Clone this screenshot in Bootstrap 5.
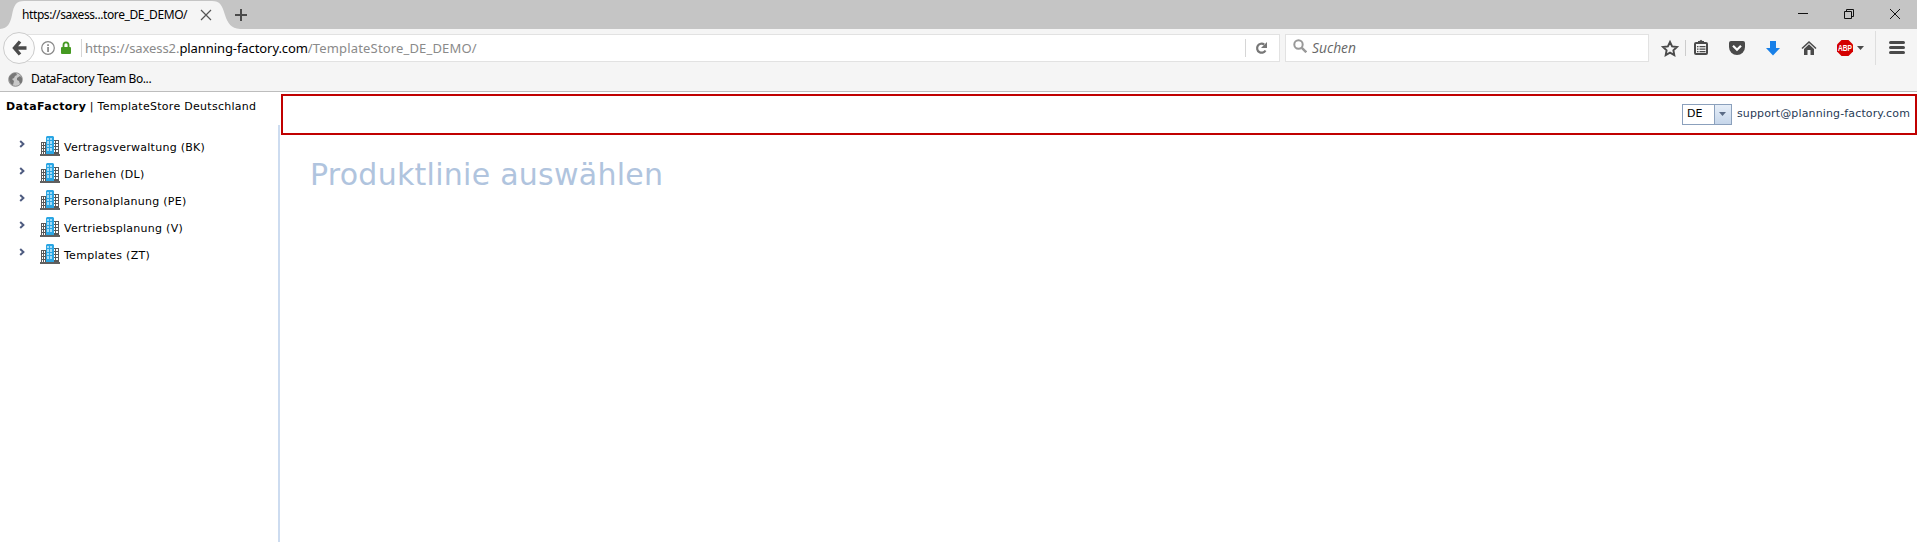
<!DOCTYPE html>
<html lang="de">
<head>
<meta charset="utf-8">
<title>DataFactory</title>
<link href="https://cdn.jsdelivr.net/npm/bootstrap@5.3.0/dist/css/bootstrap.min.css" rel="stylesheet">
<style>
body{height:542px;overflow:hidden;background:#fff;color:#000;font-family:"DejaVu Sans",sans-serif;font-size:11px;line-height:16px}
svg{display:block;flex:none}
.chrome{font-family:"Noto Sans",sans-serif;font-size:12px;background:#f5f5f5;height:92px;border-bottom:1px solid #bdbdbd}
.tabstrip{height:29px;background:#c5c5c5}
.tab-shape{left:0;top:0}
.tab-label{width:200px;padding-left:22px;letter-spacing:-.4px}
.new-tab{margin-left:22px}
.win-buttons{padding-right:16px;padding-bottom:3px}
.toolbar{height:38px}
.back{width:32px;height:32px;border:1px solid #ccc;border-radius:50%;background:#fafafa;margin-left:3px;z-index:1;flex:none}
.url{width:1261px;height:28px;margin-left:-16px;border:1px solid #e2e2e2;background:#fff;padding-left:21px;font-size:13px;color:#8a8a8a}
.url-scheme{letter-spacing:-.08px;margin-left:3px}
.url-host{color:#000}
.url-path{letter-spacing:.16px}
.finder{width:364px;height:28px;margin-left:5px;border:1px solid #e2e2e2;background:#fff;padding-left:7px;color:#666;font-size:13.8px}
.finder-text{font-family:"Open Sans",sans-serif;font-style:italic;padding-left:5px}
.rule{width:1px;height:18px;background:#d6d6d6;flex:none}
.bookmarks{height:24px;padding-left:8px;letter-spacing:-.42px;gap:8px}
.side{width:278px}
.side-title{height:33px;padding:7px 0 0 6px;white-space:nowrap}
.side-title b{letter-spacing:.44px}
.side-title span{letter-spacing:.28px}
.tree{padding-top:8px}
.node{height:27px;padding-left:19px;letter-spacing:.27px}
.node-text{padding:7px 0 0 4px}
.node-arrow{margin:7px 15px 0 0}
.node-icon{margin-top:3px}
.main-col{padding:2px 0 0 1px}
.divider{width:2px;background:#cddcf0;margin-top:33px}
.header-box{height:41px;border:2px solid #c00000;padding:0 5px 1px 0}
.lang{width:50px;height:21px;border:1px solid #8ba0bc;background:#fff}
.lang-arrow{width:17px;border-left:1px solid #8ba0bc;background:linear-gradient(#e6eef8,#c6d6ea)}
.mail{color:#283b56;text-decoration:none;letter-spacing:.14px;margin-left:5px}
.page-heading{font-size:30px;line-height:36px;color:#b0c4de;letter-spacing:.26px;font-weight:400;margin:22px 0 0 29px}
</style>
<script src="https://cdn.jsdelivr.net/npm/bootstrap@5.3.0/dist/js/bootstrap.bundle.min.js"></script>
</head>
<body class="d-flex flex-column">
<svg width="0" height="0" class="position-absolute">
  <symbol id="building" viewBox="0 0 20 20">
    <path fill="#585858" d="M1 6h6v12H1zM13 4h6v14h-6z"/>
    <path fill="#fff" d="M2 7h1v2H2zM4 7h1v2H4zM2 10h1v2H2zM4 10h1v2H4zM2 13h1v2H2zM4 13h1v2H4zM2 16h1v2H2zM4 16h1v2H4zM14 5h1v2h-1zM16 5h2v2h-2zM14 8h1v2h-1zM16 8h2v2h-2zM14 11h1v2h-1zM16 11h2v2h-2zM14 14h1v2h-1zM16 14h2v2h-2z"/>
    <path fill="#2ba6e4" d="M7 0h6l1 1v17H6V1z"/>
    <path fill="#a4dcf8" d="M7 2h2v2H7zM10 2h2v2h-2zM7 5h2v3H7zM10 5h2v3h-2zM7 9h2v2H7zM10 9h2v2h-2zM7 12h2v3H7zM10 12h2v3h-2z"/>
    <path fill="#606060" d="M0 18h20v2H0z"/>
  </symbol>
  <symbol id="arrow" viewBox="0 0 6 8"><path d="M1.200 1 4.400 4 1.200 7" fill="none" stroke="#4f5c80" stroke-width="2"/></symbol>
</svg>

<header class="chrome flex-shrink-0">
  <div class="tabstrip d-flex align-items-center position-relative">
    <svg class="tab-shape position-absolute" width="242" height="29"><path fill="#f5f5f5" d="M0 29C8 28 10 24 12 15C14 5 16 1 24 1H212C220 1 222 5 225 15C228 24 231 28 240 29Z"/></svg>
    <div class="tab-label position-relative">https://saxess...tore_DE_DEMO/</div>
    <svg class="position-relative" width="12" height="12"><path d="m1 1 10 10M11 1 1 11" stroke="#555" stroke-width="1.200"/></svg>
    <svg class="new-tab" width="14" height="14"><path d="M7 1v12M1 7h12" stroke="#4a4a4a" stroke-width="2"/></svg>
    <div class="win-buttons d-flex align-items-center ms-auto">
      <svg width="104" height="14" viewBox="0 0 104 14" fill="none" stroke="#111"><path d="M1 7.500h10M47.500 5.500h7v7h-7zM49.500 5V3.500h7v7H55M93 3l10 10M103 3 93 13"/></svg>
    </div>
  </div>

  <div class="toolbar d-flex align-items-center">
    <div class="back d-flex align-items-center justify-content-center"><svg width="15" height="16" fill="none" stroke="#4a4a4a" stroke-width="3.400"><path d="M8 1.500 2.500 8 8 14.500M3 8h11.500"/></svg></div>
    <div class="url d-flex align-items-center flex-shrink-0">
      <svg width="14" height="14"><circle cx="7" cy="7" r="6.300" fill="none" stroke="#888" stroke-width="1.200"/><path fill="#888" d="M6.200 6h1.700v5H6.200zM6.200 3.200h1.700v1.700H6.200z"/></svg>
      <svg class="ms-1" width="14" height="14"><path d="M4.500 7V4a2.500 2.700 0 0 1 5 0v3" fill="none" stroke="#459a22" stroke-width="1.800"/><rect x="2" y="6" width="10" height="7" rx="1" fill="#459a22"/></svg>
      <div class="rule ms-2"></div>
      <div class="url-scheme">https://saxess2.<span class="url-host">planning-factory.com</span><span class="url-path">/TemplateStore_DE_DEMO/</span></div>
      <div class="rule ms-auto"></div>
      <svg width="33" height="14" viewBox="0 0 33 14"><path d="M19.500 9.500A4.500 4.500 0 1 1 18.200 3.500" fill="none" stroke="#777" stroke-width="2.200"/><path fill="#777" d="M21 1v6h-6z"/></svg>
    </div>
    <div class="finder d-flex align-items-center flex-shrink-0">
      <svg class="mb-1" width="14" height="14"><circle cx="5.500" cy="5.500" r="4.200" fill="none" stroke="#999" stroke-width="2"/><path d="m8.800 8.800 4.500 4.500" stroke="#999" stroke-width="2.400"/></svg>
      <span class="finder-text">Suchen</span>
    </div>
    <svg width="268" height="38" viewBox="1649 29 268 38">
      <path d="m1670 42 2.100 4.400 4.900.6-3.600 3.300.9 4.800-4.300-2.400-4.300 2.400.9-4.800-3.600-3.300 4.900-.6z" fill="none" stroke="#4a4a4a" stroke-width="1.900"/>
      <path d="M1685.500 40v16" stroke="#ccc"/>
      <rect x="1695" y="43" width="12" height="11" rx="1" fill="none" stroke="#4a4a4a" stroke-width="2"/><path fill="#4a4a4a" d="M1698 41h1.500l1.500-1.200 1.500 1.200h1.500v3h-6zM1697 46h1.500v1.300h-1.500zM1699.500 46h6v1.300h-6zM1697 48.500h1.500v1.300h-1.500zM1699.500 48.500h6v1.300h-6zM1697 51h1.500v1.300h-1.500zM1699.500 51h6v1.300h-6z"/>
      <path fill="#4a4a4a" d="M1731 41h12q2 0 2 2v4a8 8 0 0 1-16 0v-4q0-2 2-2z"/><path d="m1733 45.800 4 4 4-4" fill="none" stroke="#fff" stroke-width="2.200"/>
      <path fill="#1880e8" d="M1770 41h6v7h4l-7 7.500-7-7.500h4z"/>
      <path fill="#4a4a4a" d="m1804 49 5-4.800 5 4.800v6h-3.500v-5h-3v5h-3.500z"/><path d="m1802 48.500 7-6.500 7 6.500" fill="none" stroke="#4a4a4a" stroke-width="1.600"/>
      <path fill="#d40000" d="M1841.500 40h7l4.500 4.500v7l-4.500 4.500h-7l-4.500-4.500v-7z"/><text x="1845" y="51" text-anchor="middle" textLength="14" lengthAdjust="spacingAndGlyphs" font-family="Liberation Sans" font-size="8.500" font-weight="700" fill="#fff">ABP</text>
      <path fill="#4a4a4a" d="M1857 46h7l-3.500 4z"/>
      <path d="M1875.500 31v34" stroke="#dedede"/>
      <path d="M1890.500 42.500h13M1890.500 47.500h13M1890.500 52.500h13" stroke="#4a4a4a" stroke-width="3" stroke-linecap="round"/>
    </svg>
  </div>

  <div class="bookmarks d-flex align-items-center">
    <svg width="15" height="15"><circle cx="7.500" cy="7.500" r="6.800" fill="#c8c8c8" stroke="#8d8d8d"/><path fill="#777" d="M1 6c1-4 5-5.500 7-5l1 2-2 1-1 2-2 1 2 2-1 4C2 12 1 9 1 6zM9 6l3-2 2 2v4l-2 2-1-3-2-1z"/></svg>
    <span>DataFactory Team Bo...</span>
  </div>
</header>

<div class="d-flex flex-grow-1">
  <aside class="side flex-shrink-0">
    <div class="side-title"><b>DataFactory</b> <span>| TemplateStore Deutschland</span></div>
    <div class="tree">
      <div class="node d-flex"><svg class="node-arrow" width="6" height="8"><use href="#arrow"/></svg><svg class="node-icon" width="20" height="20"><use href="#building"/></svg><span class="node-text">Vertragsverwaltung (BK)</span></div>
      <div class="node d-flex"><svg class="node-arrow" width="6" height="8"><use href="#arrow"/></svg><svg class="node-icon" width="20" height="20"><use href="#building"/></svg><span class="node-text">Darlehen (DL)</span></div>
      <div class="node d-flex"><svg class="node-arrow" width="6" height="8"><use href="#arrow"/></svg><svg class="node-icon" width="20" height="20"><use href="#building"/></svg><span class="node-text">Personalplanung (PE)</span></div>
      <div class="node d-flex"><svg class="node-arrow" width="6" height="8"><use href="#arrow"/></svg><svg class="node-icon" width="20" height="20"><use href="#building"/></svg><span class="node-text">Vertriebsplanung (V)</span></div>
      <div class="node d-flex"><svg class="node-arrow" width="6" height="8"><use href="#arrow"/></svg><svg class="node-icon" width="20" height="20"><use href="#building"/></svg><span class="node-text">Templates (ZT)</span></div>
    </div>
  </aside>
  <div class="divider flex-shrink-0"></div>
  <main class="main-col flex-grow-1">
    <div class="header-box d-flex align-items-center justify-content-end">
      <div class="lang d-flex align-items-stretch">
        <span class="flex-grow-1 ps-1 align-self-center">DE</span>
        <span class="lang-arrow d-flex align-items-center justify-content-center"><svg width="7" height="4"><path fill="#5a6b85" d="M0 0h7L3.500 4z"/></svg></span>
      </div>
      <a class="mail" href="#">support@planning-factory.com</a>
    </div>
    <h1 class="page-heading">Produktlinie auswählen</h1>
  </main>
</div>
</body>
</html>
